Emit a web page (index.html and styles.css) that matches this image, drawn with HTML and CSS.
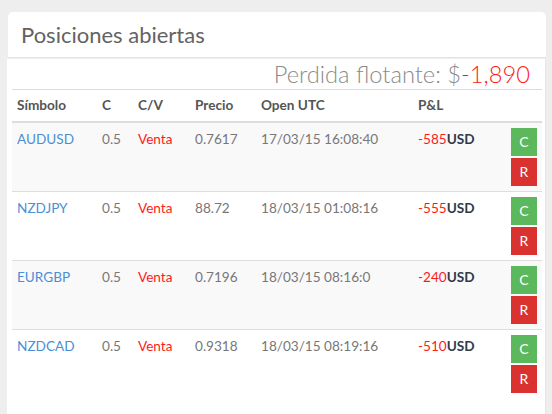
FILE: index.html
```html
<!DOCTYPE html>
<html>
<head>
<meta charset="utf-8">
<link rel="stylesheet" href="styles.css">
</head>
<body>
<div class="wrap">
  <div class="panel-head">Posiciones abiertas</div>
  <div class="panel-body">
    <div class="summary">Perdida flotante: $<span class="neg">-1,890</span></div>
    <table class="grid">
      <colgroup>
        <col class="c1"><col class="c2"><col class="c3"><col class="c4"><col class="c5"><col class="c6"><col class="c7">
      </colgroup>
      <thead>
        <tr><th>Símbolo</th><th>C</th><th>C/V</th><th>Precio</th><th>Open UTC</th><th>P&amp;L</th><th></th></tr>
      </thead>
      <tbody>
        <tr class="odd">
          <td class="sym">AUDUSD</td><td>0.5</td><td class="sell">Venta</td><td>0.7617</td><td>17/03/15 16:08:40</td>
          <td><span class="neg">-585</span><b class="cur">USD</b></td>
          <td class="acts"><span class="btn btn-c">C</span><span class="btn btn-r">R</span></td>
        </tr>
        <tr>
          <td class="sym">NZDJPY</td><td>0.5</td><td class="sell">Venta</td><td>88.72</td><td>18/03/15 01:08:16</td>
          <td><span class="neg">-555</span><b class="cur">USD</b></td>
          <td class="acts"><span class="btn btn-c">C</span><span class="btn btn-r">R</span></td>
        </tr>
        <tr class="odd">
          <td class="sym">EURGBP</td><td>0.5</td><td class="sell">Venta</td><td>0.7196</td><td>18/03/15 08:16:0</td>
          <td><span class="neg">-240</span><b class="cur">USD</b></td>
          <td class="acts"><span class="btn btn-c">C</span><span class="btn btn-r">R</span></td>
        </tr>
        <tr class="last">
          <td class="sym">NZDCAD</td><td>0.5</td><td class="sell">Venta</td><td>0.9318</td><td>18/03/15 08:19:16</td>
          <td><span class="neg">-510</span><b class="cur">USD</b></td>
          <td class="acts"><span class="btn btn-c">C</span><span class="btn btn-r">R</span></td>
        </tr>
      </tbody>
    </table>
  </div>
</div>
</body>
</html>
```
FILE: styles.css
```css
html, body {
  margin: 0;
  padding: 0;
  background: #eeeeee;
  font-family: Lato, "Open Sans", sans-serif;
}
.wrap {
  padding: 12px 6px 0 7px;
  height: 402px;
  overflow: hidden;
}
.panel-head {
  margin-left: 1px;
  height: 46px;
  box-sizing: border-box;
  background: #fff;
  border-radius: 5px 5px 0 0;
  border-bottom: 1px solid #e3e3e3;
  padding: 8px 13px 0;
  font-size: 22px;
  line-height: 30px;
  color: #636363;
}
.panel-body {
  margin-top: 1px;
  background: #fff;
  border-right: 1px solid #e6e6e6;
  padding: 0 4px 0 5px;
  height: 360px;
}
.summary {
  text-align: right;
  font-size: 23.7px;
  font-weight: 300;
  color: #8a8a8a;
  line-height: 30px;
  height: 30px;
  padding-right: 11px;
}
.neg { color: #ff1a1a; }
.grid {
  width: 530px;
  border-collapse: collapse;
  table-layout: fixed;
  font-size: 13.6px;
  color: #777;
}
.c1 { width: 85px; }
.c2 { width: 36px; }
.c3 { width: 57px; }
.c4 { width: 66px; }
.c5 { width: 157px; }
.c6 { width: 93px; }
.c7 { width: 36px; }
.grid th {
  text-align: left;
  font-weight: 700;
  color: #555;
  padding: 6px 5px 7px;
  line-height: 18px;
  border-top: 1px solid #ddd;
  border-bottom: 2px solid #ddd;
}
.grid td {
  padding: 7px 5px 0;
  line-height: 18px;
  height: 61px;
  vertical-align: top;
  border-bottom: 1px solid #ddd;
  white-space: nowrap;
}
.grid tr.last td { border-bottom: 0; }
.grid tr.odd td { background: #f9f9f9; }
.sym { color: #4a8fd6; }
.sell { color: #ff1a1a; }
.cur { color: #2f3b4a; font-weight: 700; }
.grid td.acts {
  padding: 5px 0 0 5px;
}
.btn {
  display: flex;
  align-items: center;
  justify-content: center;
  width: 26px;
  height: 28px;
  color: #fff;
  font-size: 14px;
}
.btn-c { background: #5cb85c; }
.btn-r { background: #d9322f; margin-top: 2px; }
```
